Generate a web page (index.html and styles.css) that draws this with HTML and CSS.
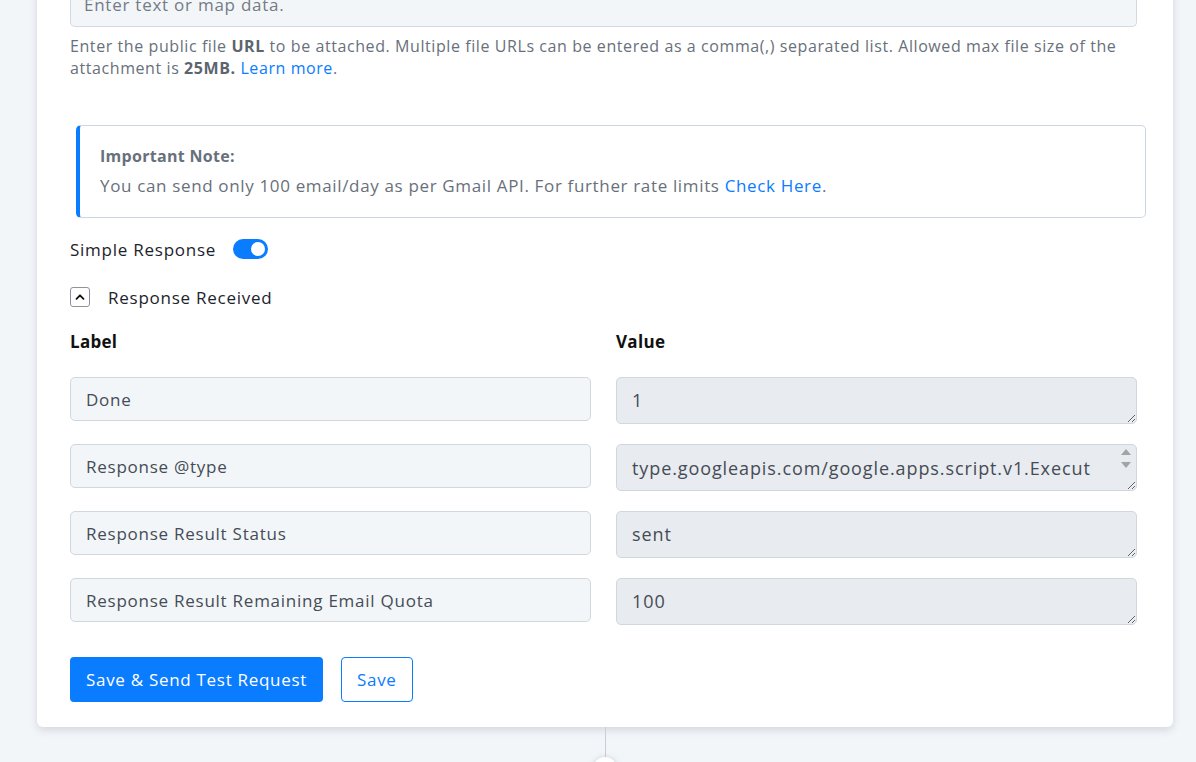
FILE: index.html
```html
<!DOCTYPE html>
<html lang="en">
<head>
    <meta charset="UTF-8">
    <meta name="viewport" content="width=device-width, initial-scale=1.0">
    <title>Gmail Send Email</title>
    <link rel="stylesheet" href="styles.css">
</head>
<body>
    <div class="card">
        <div class="map-input">Enter text or map data.</div>
        <p class="help">Enter the public file <b>URL</b> to be attached. Multiple file URLs can be entered as a comma(,) separated list. Allowed max file size of the attachment is <b>25MB.</b> <a href="#">Learn more</a>.</p>

        <div class="note">
            <div class="note-title">Important Note:</div>
            <div>You can send only 100 email/day as per Gmail API. For further rate limits <a href="#">Check Here</a>.</div>
        </div>

        <div class="toggle-row">
            <span>Simple Response</span>
            <span class="switch"><span class="knob"></span></span>
        </div>

        <div class="collapse-row">
            <span class="chevron">
                <svg width="12" height="12" viewBox="0 0 12 12"><path d="M2.5 7.8 L6 4.3 L9.5 7.8" fill="none" stroke="#111" stroke-width="1.8" stroke-linecap="round" stroke-linejoin="round"/></svg>
            </span>
            <span>Response Received</span>
        </div>

        <div class="fields">
            <div class="field-head">Label</div>
            <div class="field-head">Value</div>

            <input class="label-input" type="text" value="Done">
            <div class="value-wrap"><textarea class="value-input" rows="1">1</textarea></div>

            <input class="label-input" type="text" value="Response @type">
            <div class="value-wrap">
                <textarea class="value-input scrolled" rows="1">type.googleapis.com/google.apps.script.v1.ExecutionResponse</textarea>
                <div class="scroll-arrows">
                    <svg width="12" height="10" viewBox="0 0 12 10"><path d="M1 8 L6 2 L11 8 Z" fill="#a3a3a3"/></svg>
                    <svg width="12" height="10" viewBox="0 0 12 10"><path d="M1 2 L6 8 L11 2 Z" fill="#a3a3a3"/></svg>
                </div>
            </div>

            <input class="label-input" type="text" value="Response Result Status">
            <div class="value-wrap"><textarea class="value-input" rows="1">sent</textarea></div>

            <input class="label-input" type="text" value="Response Result Remaining Email Quota">
            <div class="value-wrap"><textarea class="value-input" rows="1">100</textarea></div>
        </div>

        <div class="buttons">
            <button class="btn btn-primary">Save &amp; Send Test Request</button>
            <button class="btn btn-outline">Save</button>
        </div>
    </div>

    <div class="connector">
        <div class="line"></div>
        <div class="dot"></div>
    </div>
</body>
</html>
```

FILE: styles.css
```css
body {
    font-family: "Open Sans", "Noto Sans", sans-serif;
    background-color: #f3f6f9;
    color: #1d232b;
    margin: 0;
    overflow: hidden;
    letter-spacing: 0.75px;
}
a {
    color: #0a7cff;
    text-decoration: none;
}
.card {
    background-color: #ffffff;
    margin: -17px 23px 0 37px;
    padding: 0 36px 25px 33px;
    border-radius: 0 0 6px 6px;
    box-shadow: 0 3px 8px rgba(60, 72, 88, 0.18);
}
.map-input {
    height: 43px;
    line-height: 43px;
    padding-left: 13px;
    background-color: #f3f6f9;
    border: 1px solid #d3d9e0;
    border-top: none;
    border-radius: 0 0 5px 5px;
    color: #737b86;
    font-size: 17px;
}
.help {
    margin: 8px 0 0;
    font-size: 16px;
    line-height: 22px;
    color: #68707b;
    letter-spacing: 0.58px;
}
.help b {
    color: #5d646e;
}
.note {
    margin: 46px -9px 0 6px;
    padding: 16px 20px 17px 20px;
    border: 1px solid #cdd6e0;
    border-left: 4px solid #0a7cff;
    border-radius: 5px;
    font-size: 17px;
    line-height: 29px;
    color: #68707b;
    letter-spacing: 0.65px;
}
.note-title {
    font-weight: bold;
    font-size: 16px;
    letter-spacing: 0.3px;
}
.toggle-row {
    display: flex;
    align-items: center;
    gap: 17px;
    margin-top: 19px;
    font-size: 17px;
    height: 24px;
}
.switch {
    width: 35px;
    height: 20px;
    border-radius: 10px;
    background-color: #0a7cff;
    display: flex;
    align-items: center;
    justify-content: flex-end;
    padding-right: 3px;
    box-sizing: border-box;
}
.knob {
    width: 14px;
    height: 14px;
    border-radius: 50%;
    background-color: #ffffff;
}
.collapse-row {
    display: flex;
    align-items: center;
    gap: 18px;
    margin-top: 24px;
    font-size: 17px;
    height: 24px;
}
.chevron {
    width: 18px;
    height: 18px;
    border: 1px solid #8c939c;
    border-radius: 3px;
    display: flex;
    align-items: center;
    justify-content: center;
}
.fields {
    display: grid;
    grid-template-columns: 521px 521px;
    column-gap: 25px;
    row-gap: 20px;
    margin-top: 21px;
    align-items: start;
}
.field-head {
    font-weight: bold;
    font-size: 17px;
    line-height: 24px;
    color: #111;
    margin-bottom: 3px;
    letter-spacing: 0.3px;
}
.label-input, .value-input {
    font-family: "Open Sans", "Noto Sans", sans-serif;
    font-size: 17px;
    letter-spacing: 0.75px;
    color: #454c55;
    border: 1px solid #d1d7de;
    border-radius: 5px;
    box-sizing: border-box;
    padding: 0 15px;
    margin: 0;
    outline: none;
}
.label-input {
    height: 44px;
    background-color: #f3f6f9;
}
.value-wrap {
    position: relative;
    height: 47px;
}
.value-input {
    display: block;
    width: 100%;
    height: 47px;
    padding-top: 10px;
    line-height: 24px;
    font-size: 18px;
    letter-spacing: 0.9px;
    background-color: #e8ebef;
    resize: vertical;
    overflow: hidden;
}
.value-input.scrolled {
    padding-top: 4px;
    padding-right: 42px;
    line-height: 38px;
    word-break: break-all;
}
.scroll-arrows {
    position: absolute;
    top: 3px;
    right: 4px;
    width: 14px;
    display: flex;
    flex-direction: column;
    align-items: center;
    gap: 3px;
}
.buttons {
    display: flex;
    gap: 18px;
    margin-top: 32px;
}
.btn {
    font-family: "Open Sans", "Noto Sans", sans-serif;
    font-size: 17px;
    letter-spacing: 0.7px;
    height: 45px;
    padding: 0 16px;
    border-radius: 4px;
    cursor: pointer;
}
.btn-primary {
    background-color: #0a7cff;
    color: #ffffff;
    border: none;
}
.btn-outline {
    background-color: #ffffff;
    color: #0a7cff;
    border: 1px solid #0a7cff;
    padding: 0 15px;
}
.connector {
    display: flex;
    flex-direction: column;
    align-items: center;
    width: 1210px;
}
.line {
    width: 1px;
    height: 30px;
    background-color: #c9cfd6;
}
.dot {
    width: 24px;
    height: 24px;
    border-radius: 50%;
    background-color: #ffffff;
    box-shadow: 0 0 6px rgba(60, 72, 88, 0.2);
}
```
